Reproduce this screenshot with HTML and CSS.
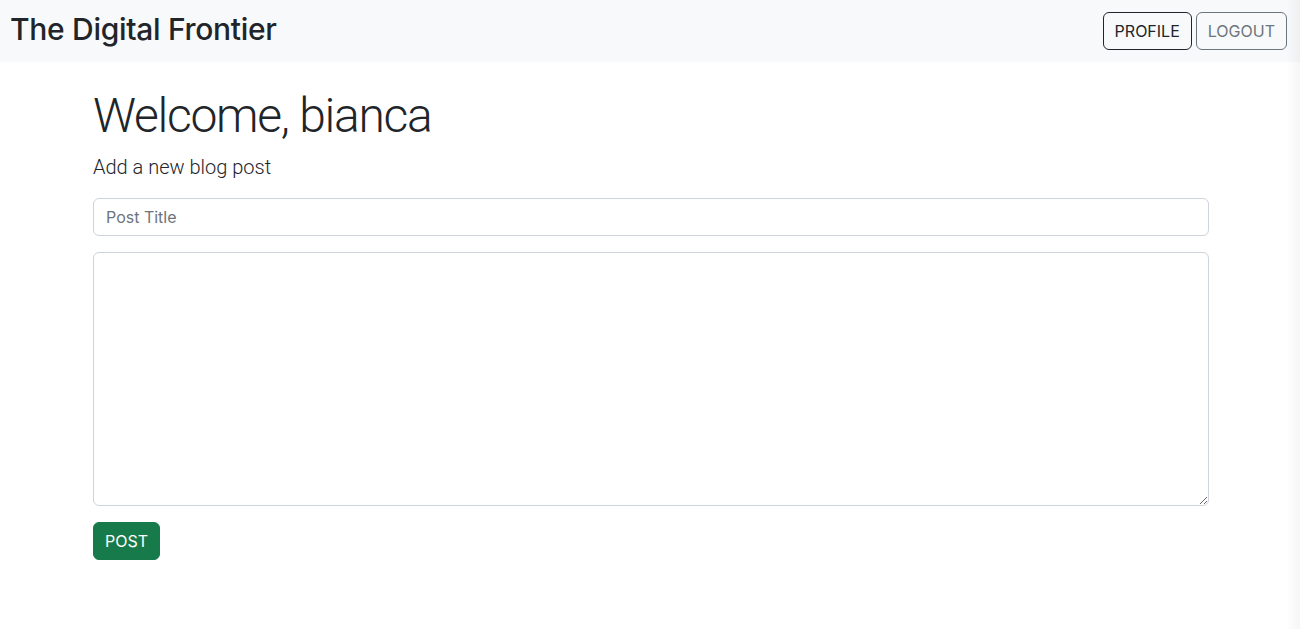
FILE: index.html
```html
<!DOCTYPE html>
<html lang="en">
<head>
<meta charset="utf-8">
<title>The Digital Frontier</title>
<link rel="stylesheet" href="styles.css">
</head>
<body>
<nav class="navbar">
  <span class="brand">The Digital Frontier</span>
  <div class="nav-actions">
    <button class="btn btn-outline-dark">PROFILE</button>
    <button class="btn btn-outline-secondary">LOGOUT</button>
  </div>
</nav>
<main class="container">
  <h1 class="welcome">Welcome, bianca</h1>
  <p class="lead">Add a new blog post</p>
  <form class="post-form">
    <input class="form-control" type="text" placeholder="Post Title">
    <textarea class="form-control textarea"></textarea>
    <div><button class="btn btn-success" type="button">POST</button></div>
  </form>
</main>
<div class="edge-shade"></div>
</body>
</html>
```
FILE: styles.css
```css
* { box-sizing: border-box; }
html, body { margin: 0; padding: 0; }
body {
  font-family: Inter, "Noto Sans", "Liberation Sans", sans-serif;
  color: #212529;
  background: #fff;
  font-size: 16px;
  line-height: 1.5;
}
.navbar {
  background: #f8f9fa;
  height: 62px;
  display: flex;
  align-items: center;
  justify-content: space-between;
  padding: 0 13px 0 10px;
}
.brand {
  font-size: 30px;
  font-weight: 500;
  letter-spacing: -0.3px;
  color: #212529;
  padding-bottom: 4px;
}
.nav-actions { display: flex; gap: 4px; }
.btn {
  font-family: inherit;
  font-size: 16px;
  line-height: 1.5;
  padding: 6px 11px;
  border-radius: 6px;
  border: 1px solid transparent;
  background: transparent;
  cursor: pointer;
  height: 38px;
}
.btn-outline-dark { border-color: #212529; color: #212529; }
.btn-outline-secondary { border-color: #6c757d; color: #6c757d; }
.btn-success { background: #177a4a; border-color: #177a4a; color: #fff; }
.container {
  max-width: 1140px;
  margin: 0 auto;
  padding: 25px 11px 0 13px;
}
.welcome {
  font-family: Roboto, Inter, sans-serif;
  font-size: 48px;
  font-weight: 300;
  line-height: 1.2;
  letter-spacing: -1.3px;
  margin: 0 0 7px;
}
.lead {
  font-family: Roboto, Inter, sans-serif;
  font-size: 20px;
  font-weight: 300;
  margin: 0 0 16px;
}
.post-form { display: flex; flex-direction: column; gap: 16px; }
.form-control {
  display: block;
  width: 100%;
  font-family: inherit;
  font-size: 16px;
  line-height: 1.5;
  padding: 6px 12px;
  color: #212529;
  border: 1px solid #ced4da;
  border-radius: 6px;
  height: 38px;
}
.form-control::placeholder { color: #6c757d; }
.textarea { height: 254px; resize: vertical; }
.edge-shade {
  position: fixed;
  top: 0;
  right: 0;
  bottom: 0;
  width: 14px;
  background: linear-gradient(to right, rgba(0,0,0,0), rgba(0,0,0,0.035));
  pointer-events: none;
}
```
